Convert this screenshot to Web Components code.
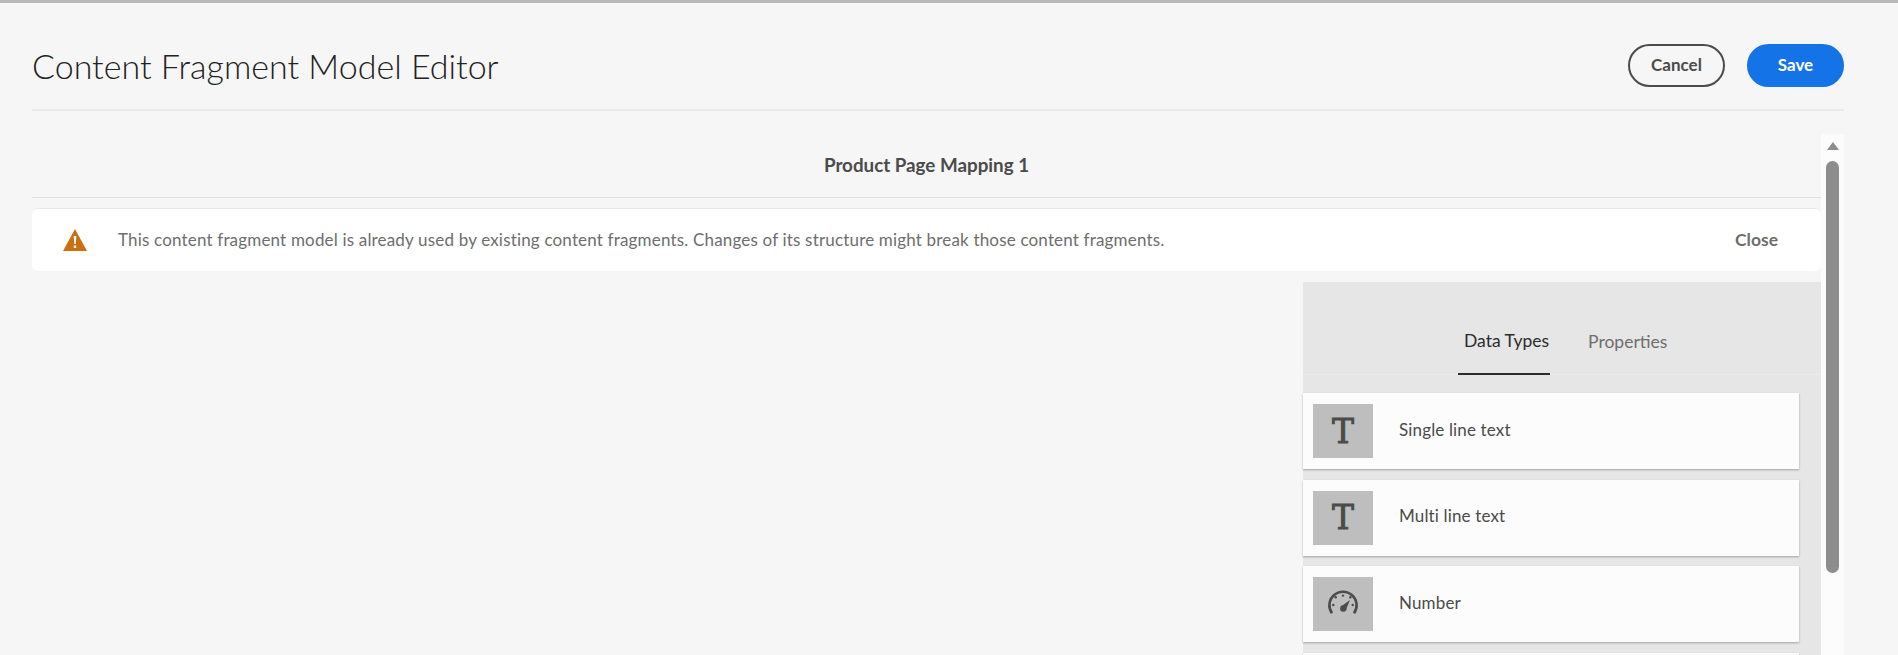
<!DOCTYPE html>
<html>
<head>
<meta charset="utf-8">
<title>Content Fragment Model Editor</title>
<style>
  html, body { margin: 0; height: 100%; overflow: hidden; background: #f6f6f6; }
  body { font-family: "Lato", "Liberation Sans", sans-serif; color: #4b4b4b; }
</style>
</head>
<body>
<cfm-editor>
  <cfm-header slot="header" heading="Content Fragment Model Editor">
    <cfm-button>Cancel</cfm-button>
    <cfm-button primary>Save</cfm-button>
  </cfm-header>
  <cfm-model-title slot="title">Product Page Mapping 1</cfm-model-title>
  <cfm-alert slot="alert">This content fragment model is already used by existing content fragments. Changes of its structure might break those content fragments.</cfm-alert>
  <cfm-sidebar slot="sidebar">
    <cfm-type-card icon="text">Single line text</cfm-type-card>
    <cfm-type-card icon="text">Multi line text</cfm-type-card>
    <cfm-type-card icon="gauge">Number</cfm-type-card>
    <cfm-type-card></cfm-type-card>
  </cfm-sidebar>
</cfm-editor>

<script>
function shadow(el, html) {
  el.attachShadow({ mode: "open" }).innerHTML = html;
}

class CfmEditor extends HTMLElement {
  constructor() {
    super();
    shadow(this, `
      <style>
        :host { display: flex; flex-direction: column; height: 655px; overflow: hidden; box-sizing: border-box; border-top: 3px solid #b9b9b9; }
        .body { flex: 1; min-height: 0; display: flex; margin: 23px 54px 0 32px; }
        .main { flex: 1; min-width: 0; display: flex; flex-direction: column; }
      </style>
      <slot name="header"></slot>
      <div class="body">
        <div class="main">
          <slot name="title"></slot>
          <slot name="alert"></slot>
          <slot name="sidebar"></slot>
        </div>
        <cfm-scrollbar></cfm-scrollbar>
      </div>`);
  }
}

class CfmHeader extends HTMLElement {
  constructor() {
    super();
    shadow(this, `
      <style>
        :host { display: flex; align-items: flex-start; justify-content: space-between; box-sizing: border-box; height: 108px; margin: 0 54px 0 32px; padding-top: 41px; border-bottom: 2px solid #e9e9e9; }
        h1 { margin: 0; font: 300 34px/44px "Lato", "Liberation Sans", sans-serif; color: #222; }
        .actions { display: flex; gap: 22px; }
      </style>
      <h1>${this.getAttribute("heading")}</h1>
      <div class="actions"><slot></slot></div>`);
  }
}

class CfmButton extends HTMLElement {
  constructor() {
    super();
    shadow(this, `
      <style>
        :host { display: flex; align-items: center; justify-content: center; box-sizing: border-box; width: 97px; height: 43px; padding-bottom: 2px; border-radius: 22px; border: 2px solid #4b4b4b; font: 700 17px "Lato", "Liberation Sans", sans-serif; color: #4b4b4b; }
        :host([primary]) { background: #1473e6; border-color: #1473e6; color: #fff; }
      </style>
      <slot></slot>`);
  }
}

class CfmModelTitle extends HTMLElement {
  constructor() {
    super();
    shadow(this, `
      <style>
        :host { display: block; box-sizing: border-box; height: 64px; line-height: 62px; text-align: center; font-weight: 700; font-size: 18.800px; color: #4b4b4b; border-bottom: 1px solid #e1e1e1; }
      </style>
      <slot></slot>`);
  }
}

class CfmAlert extends HTMLElement {
  constructor() {
    super();
    shadow(this, `
      <style>
        :host { display: flex; align-items: center; box-sizing: border-box; height: 63px; margin-top: 10px; padding: 0 43px 0 31px; background: #fff; border-top: 1px solid #e8e8e8; border-radius: 6px; font-size: 17px; letter-spacing: .175px; color: #6e6e6e; }
        svg { flex: none; width: 24px; height: 22px; margin-right: 31px; }
        .msg { flex: 1; padding-bottom: 2px; }
        .close { font-weight: 700; font-size: 17.500px; letter-spacing: 0; padding-bottom: 2px; }
      </style>
      <svg viewBox="0 0 24 22"><path fill="#cb6f10" d="M12 0 24 22H0z"/><path fill="#fff" d="M10.700 7h2.600l-.5 8h-1.600zM10.800 16.500h2.400v2.400h-2.400z"/></svg>
      <span class="msg"><slot></slot></span>
      <span class="close">Close</span>`);
  }
}

class CfmSidebar extends HTMLElement {
  constructor() {
    super();
    shadow(this, `
      <style>
        :host { display: flex; flex-direction: column; box-sizing: border-box; width: 518px; margin: 11px 0 0 auto; flex: 1; min-height: 0; background: #e6e6e6; }
        .tabs { flex: none; display: flex; box-sizing: border-box; height: 93px; padding-left: 155px; gap: 38px; border-bottom: 1px solid #ebebeb; font-size: 17.500px; }
        .tab { box-sizing: border-box; display: flex; align-items: center; height: 93px; padding-top: 26px; color: #6e6e6e; }
        .tab.on { color: #2c2c2c; border-bottom: 2px solid #2c2c2c; padding-left: 6px; padding-right: 1px; }
        .list { display: flex; flex-direction: column; gap: 10.500px; padding: 18px 22px 0 0; }
      </style>
      <div class="tabs"><span class="tab on">Data Types</span><span class="tab">Properties</span></div>
      <div class="list"><slot></slot></div>`);
  }
}

const ICONS = {
  text: `<span class="t">T</span>`,
  gauge: `<svg viewBox="0 0 32 28" width="32" height="28" fill="#4b4b4b">
      <path d="M5 23.300A13.600 13.600 0 1 1 27 23.300" fill="none" stroke="#4b4b4b" stroke-width="2.600"/>
      <circle cx="6.300" cy="15" r="1.200"/><circle cx="8.700" cy="7.300" r="1.200"/><circle cx="16" cy="5.600" r="1.200"/><circle cx="23.300" cy="7.300" r="1.200"/><circle cx="25.700" cy="15" r="1.200"/>
      <circle cx="16.300" cy="18.500" r="3.200"/><path d="M23 10 18.600 20.500 14 16.500z"/>
    </svg>`
};

class CfmTypeCard extends HTMLElement {
  constructor() {
    super();
    const icon = ICONS[this.getAttribute("icon")] || "";
    shadow(this, `
      <style>
        :host { display: flex; align-items: center; flex: none; box-sizing: border-box; height: 76px; background: #fcfcfc; box-shadow: 0 1px 2px rgba(0,0,0,.3); font-size: 17px; letter-spacing: .15px; color: #4b4b4b; }
        .icon { flex: none; width: 60px; height: 54px; margin: 0 26px 0 10px; background: #bebebe; display: flex; align-items: center; justify-content: center; }
        .t { font: 33px/1 "DejaVu Serif", serif; -webkit-text-stroke: .9px #4b4b4b; color: #4b4b4b; }
        .label { padding-bottom: 4px; }
      </style>
      <div class="icon">${icon}</div>
      <span class="label"><slot></slot></span>`);
  }
}

class CfmScrollbar extends HTMLElement {
  constructor() {
    super();
    shadow(this, `
      <style>
        :host { flex: none; display: flex; flex-direction: column; align-items: center; width: 23px; padding-top: 8px; background: #fcfcfc; }
        .arrow { width: 0; height: 0; border: 6.500px solid transparent; border-top: 0; border-bottom: 8px solid #8d8d8d; }
        .thumb { width: 13px; height: 412px; margin-top: 11px; border-radius: 7px; background: #8d8d8d; }
      </style>
      <div class="arrow"></div>
      <div class="thumb"></div>`);
  }
}

customElements.define("cfm-editor", CfmEditor);
customElements.define("cfm-header", CfmHeader);
customElements.define("cfm-button", CfmButton);
customElements.define("cfm-model-title", CfmModelTitle);
customElements.define("cfm-alert", CfmAlert);
customElements.define("cfm-sidebar", CfmSidebar);
customElements.define("cfm-type-card", CfmTypeCard);
customElements.define("cfm-scrollbar", CfmScrollbar);
</script>
</body>
</html>
